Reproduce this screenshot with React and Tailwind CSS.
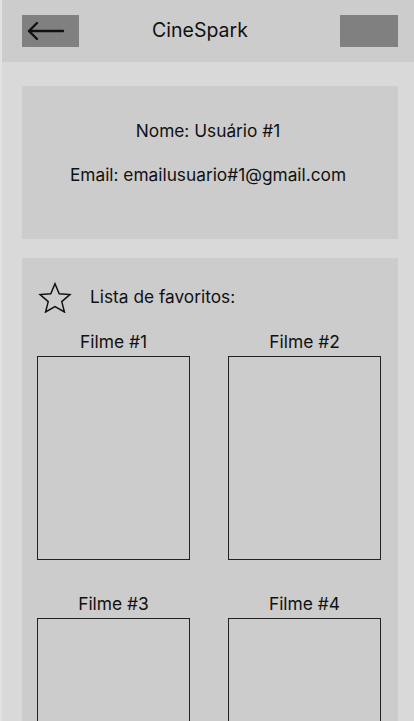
import React from 'react';

const films = ['Filme #1', 'Filme #2', 'Filme #3', 'Filme #4'];

const FilmCard = ({ title }) => {
  return (
    <div className="flex flex-col items-center">
      <span className="h-6 text-[17.4px] leading-6 text-[#111]">{title}</span>
      <div className="mt-[2px] h-[204px] w-full border border-[#222] bg-[#cccccc]" />
    </div>
  );
};

export default function App() {
  return (
    <div
      className="h-[721px] w-full overflow-hidden border-l-2 border-[#e2e2e2] bg-[#d9d9d9]"
      style={{ fontFamily: 'Inter, "Noto Sans", sans-serif' }}
    >
      <header className="flex h-[62px] items-center bg-[#cccccc] pl-5 pr-4">
        <button className="flex h-8 w-[57px] items-center bg-[#808080] pl-[4px]">
          <svg width="40" height="20" viewBox="0 0 40 20" fill="none" stroke="#111" strokeWidth="2.4" strokeLinecap="round" strokeLinejoin="round">
            <path d="M3 10h34" />
            <path d="M11 2L3 10l8 8" />
          </svg>
        </button>
        <h1 className="flex-1 pr-[19px] text-center text-[19.5px] text-[#111]">CineSpark</h1>
        <div className="h-8 w-[58px] bg-[#808080]" />
      </header>

      <main className="pl-5 pr-4">
        <section className="mt-6 flex h-[153px] flex-col items-center bg-[#cccccc] pr-1 pt-[33px] text-[17.3px] text-[#111]">
          <p className="leading-6">Nome: Usuário #1</p>
          <p className="mt-5 leading-6">Email: emailusuario#1@gmail.com</p>
        </section>

        <section className="mt-[19px] min-h-[463px] bg-[#cccccc] px-[15px] pt-[24px]">
          <div className="flex h-[30px] items-center pl-[1px]">
            <svg width="34" height="31" viewBox="0 0 24 22" fill="none" stroke="#111" strokeWidth="1.05" strokeLinejoin="miter">
              <path d="M12 1.2l3 7.1 7.6.6-5.8 5 1.9 7.4L12 17.4l-6.7 3.9 1.9-7.4-5.8-5 7.6-.6z" />
            </svg>
            <span className="ml-[18px] text-[17.3px] text-[#111]">Lista de favoritos:</span>
          </div>

          <div className="mt-[18px] grid grid-cols-2 gap-x-[38px] gap-y-[32px] pr-[2px]">
            {films.map((f) => (
              <FilmCard key={f} title={f} />
            ))}
          </div>
        </section>
      </main>
    </div>
  );
}
